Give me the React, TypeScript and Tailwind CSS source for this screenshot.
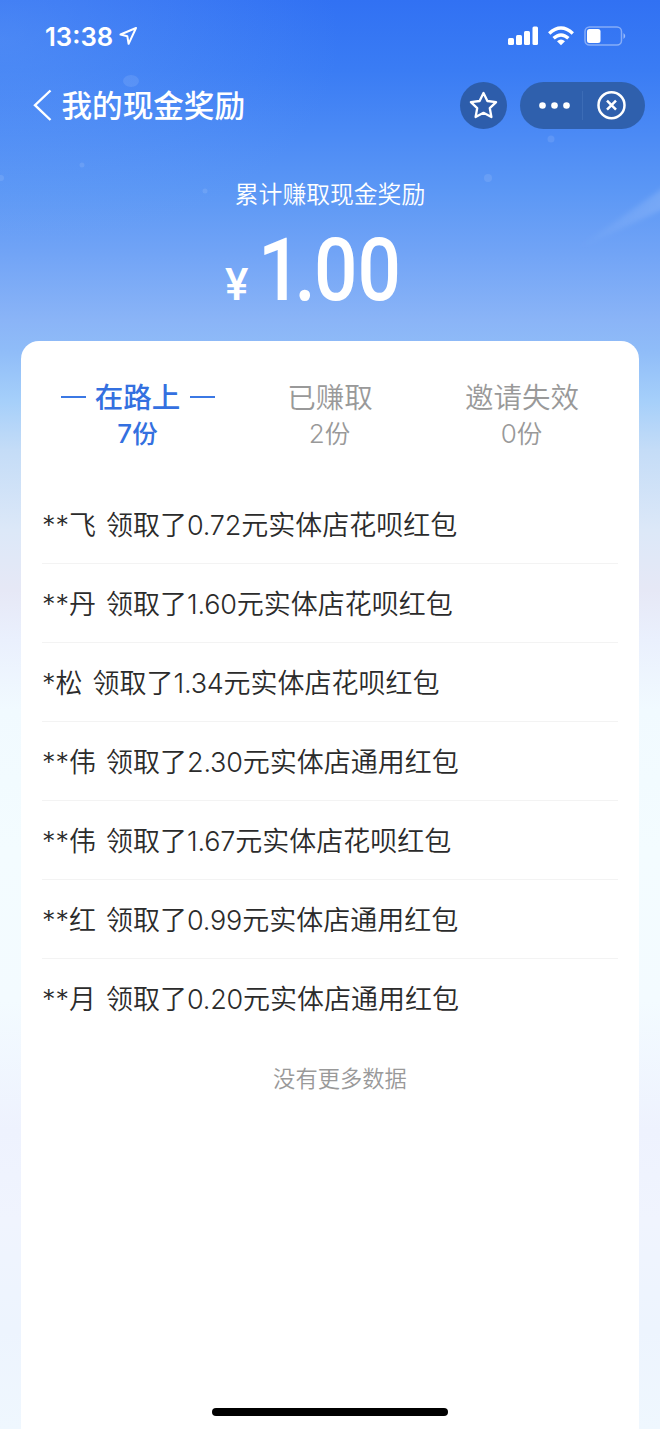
const rows = [
  ["**", "飞", "0.72", "花呗"],
  ["**", "丹", "1.60", "花呗"],
  ["*", "松", "1.34", "花呗"],
  ["**", "伟", "2.30", "通用"],
  ["**", "伟", "1.67", "花呗"],
  ["**", "红", "0.99", "通用"],
  ["**", "月", "0.20", "通用"],
];

function StatusBar() {
  return (
    <div className="flex h-[72px] shrink-0 items-center pl-[45px] pr-[33px] text-white">
      <span className="mt-px font-[Inter,sans-serif] text-[25.700px] font-semibold leading-none">13:38</span>
      <svg className="ml-[5px]" width="20" height="20" viewBox="0 0 20 20" fill="none" stroke="currentColor" strokeWidth="2" strokeLinejoin="round">
        <path d="M18 2 L2.500 8.500 L9.300 10.200 L10.600 17.800 Z" />
      </svg>
      <svg className="ml-auto" width="119" height="22" viewBox="0 0 119 22" fill="none">
        <g fill="#fff">
          <rect x="0" y="13" width="6" height="7" rx="1.5" />
          <rect x="8" y="10" width="6" height="10" rx="1.5" />
          <rect x="16" y="6" width="6" height="14" rx="1.5" />
          <rect x="24.500" y="1.500" width="5.500" height="18.500" rx="1.5" />
        </g>
        <g stroke="#fff" strokeWidth="3.400">
          <path d="M41.200 8.400 Q53 -2.400 64.800 8.400" />
          <path d="M45.600 13.200 Q53 6.600 60.400 13.200" />
        </g>
        <path d="M49 16.200 Q53 13 57 16.200 L53 20.200 Z" fill="#fff" />
        <rect x="77" y="2" width="36.500" height="18" rx="4.500" stroke="#fff" strokeOpacity=".4" strokeWidth="1.500" />
        <rect x="79" y="4" width="13.500" height="14" rx="2.500" fill="#fff" />
        <path d="M115.500 8 Q119 11 115.500 14 Z" fill="#fff" fillOpacity=".5" />
      </svg>
    </div>
  );
}

function NavBar() {
  return (
    <div className="flex h-[66px] shrink-0 items-center pl-[32px] pr-[15px] text-white">
      <svg width="20" height="32" viewBox="0 0 20 32" fill="none" stroke="currentColor" strokeWidth="2.400">
        <path d="M18.500 1.500 L3 16.200 L18.500 31" />
      </svg>
      <h1 className="-mt-px ml-[9.500px] text-[30.600px] font-medium leading-none">我的现金奖励</h1>
      <div className="ml-auto flex size-[47px] items-center justify-center rounded-full bg-[#2d5dab]">
        <svg width="30" height="30" viewBox="0 0 30 30" fill="none" stroke="currentColor" strokeWidth="2.300" strokeLinejoin="round">
          <path d="M14.500 3 L18.400 11 L27.100 12.100 L20.800 18.200 L22.400 27 L14.500 22.800 L6.600 27 L8.200 18.200 L1.900 12.100 L10.600 11 Z" />
        </svg>
      </div>
      <div className="ml-[13px] flex h-[47px] w-[125px] items-center rounded-full bg-[#2f60ad]">
        <svg width="125" height="47" viewBox="0 0 125 47" fill="none" stroke="#fff">
          <g fill="#fff" stroke="none">
            <circle cx="22.500" cy="23.500" r="3.300" />
            <circle cx="34.500" cy="23.500" r="3.300" />
            <circle cx="46.500" cy="23.500" r="3.300" />
          </g>
          <path d="M62.500 9 V38" stroke="#4a78c0" strokeOpacity=".5" />
          <circle cx="91.500" cy="23.200" r="13" strokeWidth="2.500" />
          <path d="M87 18.700 L96 27.700 M96 18.700 L87 27.700" strokeWidth="2.500" />
        </svg>
      </div>
    </div>
  );
}

function Tab({ label, count, active }: { label: string; count: string; active?: boolean }) {
  return (
    <div className={active ? "flex w-[192px] flex-col items-center text-[#3470e0]" : "flex w-[192px] flex-col items-center text-[#999]"}>
      <div className="flex h-[38px] items-center">
        {active && <span className="mr-[9px] mt-[2px] h-[1.500px] w-[25px] bg-[#3b78e4]" />}
        <span className={active ? "text-[28.500px] font-medium leading-none" : "text-[28.500px] font-[350] leading-none"}>{label}</span>
        {active && <span className="ml-[10px] mt-[2px] h-[1.500px] w-[25px] bg-[#3b78e4]" />}
      </div>
      <div className={active ? "mr-px h-[34px] text-[25.500px] font-medium leading-[34px]" : "mr-px h-[34px] text-[25.500px] font-[350] leading-[34px]"}>
        <span className={active ? "font-[Inter,sans-serif] text-[26px] font-medium" : "font-[Inter,sans-serif] text-[26px] font-light"}>{count}</span>份
      </div>
    </div>
  );
}

export default function App() {
  return (
    <div className="relative isolate flex h-[1429px] w-[660px] flex-col overflow-hidden bg-[linear-gradient(180deg,#3171f3_0px,#3a7cf4_70px,#4a89f5_130px,#5b97f5_190px,#70a3f6_250px,#8ab4f7_320px,#8fbcf8_350px,#a5cffa_400px,#c4dcf7_450px,#dce8f8_530px,#e6e8f6_590px,#eaf0fd_640px,#f1faff_710px,#f3fcff_850px,#f3fbff_1000px,#eef2fe_1130px,#f0f4fe_1220px,#edf4fe_1330px,#eff7fe_1429px)] font-['Noto_Sans_CJK_SC',sans-serif]">
      <svg className="pointer-events-none absolute left-0 top-0 -z-10" width="660" height="345" viewBox="0 0 660 345" fill="none">
        <defs>
          <radialGradient id="glow" gradientUnits="userSpaceOnUse" cx="0" cy="0" r="1" gradientTransform="translate(0 40) scale(340 210)">
            <stop stopColor="#70a5f7" stopOpacity=".36" />
            <stop offset="1" stopColor="#70a5f7" stopOpacity="0" />
          </radialGradient>
          <linearGradient id="streak" x1="0" x2="1">
            <stop stopColor="#fff" stopOpacity="0" />
            <stop offset="1" stopColor="#fff" stopOpacity=".16" />
          </linearGradient>
          <filter id="soft" x="-20%" y="-20%" width="140%" height="140%">
            <feGaussianBlur stdDeviation="2.500" />
          </filter>
        </defs>
        <rect width="660" height="345" fill="url(#glow)" />
        <path d="M575 250 L670 183 V206 Z" fill="url(#streak)" filter="url(#soft)" />
        <g fill="#fff" fillOpacity=".1">
          <ellipse cx="131" cy="81" rx="8" ry="6" />
          <circle cx="551" cy="139" r="3.500" />
          <circle cx="488" cy="178" r="4" />
          <circle cx="82" cy="165" r="2.500" />
          <circle cx="205" cy="191" r="2.500" />
          <circle cx="1" cy="178" r="3" />
        </g>
      </svg>

      <StatusBar />
      <NavBar />

      <header className="flex h-[203px] shrink-0 flex-col items-center pt-[43px] text-white">
        <p className="text-[23.800px] font-[350] leading-[24px]">累计赚取现金奖励</p>
        <div className="ml-[225px] mt-[23px] flex h-[84px] items-baseline self-start font-[Roboto,sans-serif] font-medium leading-[84px]">
          <span className="w-[25px] text-[44px]">¥</span>
          <span className="ml-[8px] origin-left scale-x-[.88] text-[87px]">
            <span className="tracking-[-8px]">1</span>
            <span className="tracking-[-2px]">.</span>
            <span>00</span>
          </span>
        </div>
      </header>

      <main className="mx-[21px] flex flex-1 flex-col rounded-t-[18px] bg-white px-[21px]">
        <div className="mt-[36px] flex">
          <Tab label="在路上" count="7" active />
          <Tab label="已赚取" count="2" />
          <Tab label="邀请失效" count="0" />
        </div>
        <ul className="mt-[36px] text-[27px] font-[350] text-[#2b2b2b]">
          {rows.map(([mask, name, amount, kind], i) => (
            <li key={i} className="h-[79px] whitespace-pre border-b border-[#f3f3f3] leading-[78px] last:border-b-0">
              <span className="font-[Inter,sans-serif] font-light">{mask}</span>
              <span className="mr-[10px]">{name}</span>
              <span>领取了</span>
              <span className="font-[Inter,sans-serif] font-light tracking-[-0.200px]">{amount}</span>
              <span>元实体店{kind}红包</span>
            </li>
          ))}
        </ul>
        <p className="ml-[20px] mt-[27px] text-center text-[22.300px] font-[350] leading-[24px] text-[#999]">没有更多数据</p>
        <div className="mb-[13px] mt-auto h-[8px] w-[236px] self-center rounded-full bg-black" />
      </main>
    </div>
  );
}
